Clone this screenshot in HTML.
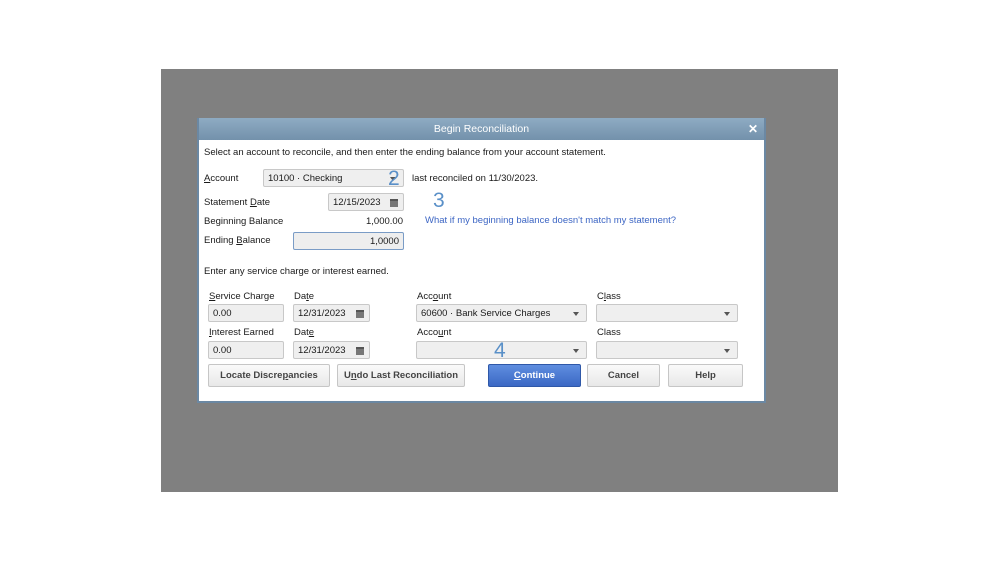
<!DOCTYPE html>
<html><head><style>
*{box-sizing:border-box;margin:0;padding:0}
body{width:999px;height:562px;background:#fff;position:relative;overflow:hidden;font-family:"Liberation Sans",sans-serif;font-size:9.5px;color:#1a1a1a}
.bg{position:absolute;left:161px;top:69px;width:677px;height:423px;background:#808080}
.dlg{position:absolute;left:197px;top:118px;width:569px;height:285px;background:#6b88a3;border:2px solid #6b88a3;border-top:0}
.tb{position:absolute;left:0;top:0;width:565px;height:22px;background:linear-gradient(#8eabc3,#7391ab);color:#fff;font-size:10.5px;text-align:center;line-height:22px}
.x{position:absolute;right:6px;top:0;font-weight:bold;font-size:12px}
.body{position:absolute;left:0;top:22px;width:565px;height:261px;background:#fff}
.a{position:absolute;white-space:nowrap}
.f{position:absolute;background:#efefef;border:1px solid #c8c8c8;border-radius:2px;padding:0 4px;line-height:17px;height:18px;white-space:nowrap}
.dd::after{content:"";position:absolute;right:7px;top:7px;border:3.5px solid transparent;border-top:4px solid #555}
.cal{position:absolute;right:5px;top:5px;width:8px;height:8px;background:#777;border-top:2px solid #555}
.b{position:absolute;height:23px;border:1px solid #c6c6c6;border-radius:2px;background:linear-gradient(#fafafa,#e8e8e8);text-align:center;line-height:21px;font-weight:bold;color:#444}
.n{position:absolute;color:#5a90c8;font-size:21px}
u{text-decoration:underline}
</style></head><body>
<div class="bg"></div>
<div class="dlg">
<div class="tb">Begin Reconciliation<span class="x">✕</span></div>
<div class="body">
<div class="a" style="left:5px;top:7px">Select an account to reconcile, and then enter the ending balance from your account statement.</div>
<div class="a" style="left:5px;top:33px"><u>A</u>ccount</div>
<div class="f dd" style="left:64px;top:29px;width:141px">10100 · Checking</div>
<div class="n" style="left:189px;top:27px">2</div>
<div class="a" style="left:213px;top:33px">last reconciled on 11/30/2023.</div>
<div class="a" style="left:5px;top:57px">Statement <u>D</u>ate</div>
<div class="f" style="left:129px;top:53px;width:76px">12/15/2023<span class="cal"></span></div>
<div class="n" style="left:234px;top:49px">3</div>
<div class="a" style="left:5px;top:76px">Beginning Balance</div>
<div class="a" style="left:167px;top:76px">1,000.00</div>
<div class="a" style="left:226px;top:75px;color:#3d66c4">What if my beginning balance doesn't match my statement?</div>
<div class="a" style="left:5px;top:95px">Ending <u>B</u>alance</div>
<div class="f" style="left:94px;top:92px;width:111px;text-align:right;border-color:#7a9cc6;background:#eeeeee">1,0000</div>
<div class="a" style="left:5px;top:126px">Enter any service charge or interest earned.</div>
<div class="a" style="left:10px;top:151px"><u>S</u>ervice Charge</div>
<div class="a" style="left:95px;top:151px">Da<u>t</u>e</div>
<div class="a" style="left:218px;top:151px">Acc<u>o</u>unt</div>
<div class="a" style="left:398px;top:151px">C<u>l</u>ass</div>
<div class="f" style="left:9px;top:164px;width:76px">0.00</div>
<div class="f" style="left:94px;top:164px;width:77px">12/31/2023<span class="cal"></span></div>
<div class="f dd" style="left:217px;top:164px;width:171px">60600 · Bank Service Charges</div>
<div class="f dd" style="left:397px;top:164px;width:142px"></div>
<div class="a" style="left:10px;top:187px"><u>I</u>nterest Earned</div>
<div class="a" style="left:95px;top:187px">Dat<u>e</u></div>
<div class="a" style="left:218px;top:187px">Acco<u>u</u>nt</div>
<div class="a" style="left:398px;top:187px">Class</div>
<div class="f" style="left:9px;top:201px;width:76px">0.00</div>
<div class="f" style="left:94px;top:201px;width:77px">12/31/2023<span class="cal"></span></div>
<div class="f dd" style="left:217px;top:201px;width:171px"></div>
<div class="f dd" style="left:397px;top:201px;width:142px"></div>
<div class="n" style="left:295px;top:199px">4</div>
<div class="b" style="left:9px;top:224px;width:122px">Locate Discre<u>p</u>ancies</div>
<div class="b" style="left:138px;top:224px;width:128px">U<u>n</u>do Last Reconciliation</div>
<div class="b" style="left:289px;top:224px;width:93px;background:linear-gradient(#5f8ee0,#3b68c4);border-color:#2f58a8;color:#fff"><u>C</u>ontinue</div>
<div class="b" style="left:388px;top:224px;width:73px">Cancel</div>
<div class="b" style="left:469px;top:224px;width:75px">Help</div>
</div></div>
</body></html>
